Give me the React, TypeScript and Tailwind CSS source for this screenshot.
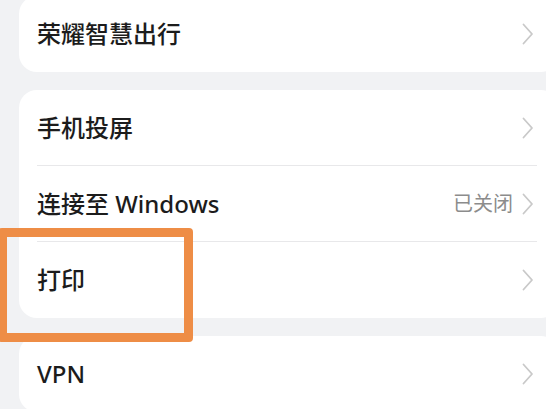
type Row = { label: string; value?: string };

const groups: Row[][] = [
  [{ label: '荣耀智慧出行' }],
  [{ label: '手机投屏' }, { label: '连接至 Windows', value: '已关闭' }, { label: '打印' }],
  [{ label: 'VPN' }],
];

const font = { fontFamily: '"Noto Sans", "Noto Sans CJK SC", sans-serif' };

function Chevron() {
  return (
    <svg width="12" height="22" viewBox="0 0 12 22" fill="none" className="shrink-0">
      <path d="M1.5 1.5 10 11 1.5 20.5" stroke="#c9c9c9" strokeWidth="1.8" strokeLinecap="round" strokeLinejoin="round" />
    </svg>
  );
}

function SettingRow({ row, last }: { row: Row; last: boolean }) {
  return (
    <div className="relative flex h-[76px] items-center pl-[18px] pr-[25px]">
      <span className="flex-1 text-[24px] font-medium text-[#1c1c1c]">{row.label}</span>
      {row.value && <span className="mr-[9px] text-[20px] text-[#8c8c8c]">{row.value}</span>}
      <Chevron />
      {!last && <div className="absolute bottom-0 left-[18px] right-[22px] h-px bg-[#e8e8ea]" />}
    </div>
  );
}

export default function App() {
  return (
    <div className="relative h-[409px] w-[546px] overflow-hidden bg-[#f1f2f4]" style={font}>
      <div className="-mt-[4px] ml-[19px] flex w-[540px] flex-col gap-[18px]">
        {groups.map((rows, gi) => (
          <div key={gi} className="rounded-[18px] bg-white">
            {rows.map((row, i) => (
              <SettingRow key={row.label} row={row} last={i === rows.length - 1} />
            ))}
          </div>
        ))}
      </div>

      {/* highlight annotation */}
      <div className="absolute left-[-2px] top-[228px] h-[114px] w-[195px] rounded-[4px] border-[9px] border-[#ee8d46]" />
    </div>
  );
}
